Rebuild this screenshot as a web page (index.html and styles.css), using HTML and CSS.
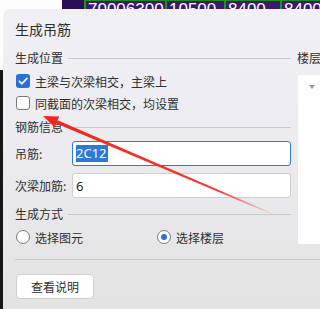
FILE: index.html
```html
<!DOCTYPE html>
<html>
<head>
<meta charset="utf-8">
<link rel="stylesheet" href="styles.css">
</head>
<body>
<div class="strip">
  <div class="strip-blank"></div>
  <div class="strip-grid">
    <div class="cell cell-dark"></div>
    <div class="cell c1">70006300</div>
    <div class="cell c2">10500</div>
    <div class="cell c3">8400</div>
    <div class="cell c4">8400</div>
  </div>
</div>
<div class="dialog">
  <div class="title">生成吊筋</div>
  <div class="main">
    <div class="left">
      <div class="sec-head">生成位置</div>
      <label class="check first"><span class="box checked"><svg viewBox="0 0 14 14" width="14" height="14"><path d="M3.2 7.2 L5.9 9.8 L10.9 4.4" fill="none" stroke="#fff" stroke-width="1.6" stroke-linecap="round" stroke-linejoin="round"/></svg></span>主梁与次梁相交，主梁上</label>
      <label class="check"><span class="box"></span>同截面的次梁相交，均设置</label>
      <div class="sec-head sec2">钢筋信息</div>
      <div class="field f1"><span class="flabel">吊筋:</span><span class="input focus"><span class="sel">2C12</span></span></div>
      <div class="field f2"><span class="flabel">次梁加筋:</span><span class="input">6</span></div>
      <div class="sec-head sec3">生成方式</div>
      <div class="radios">
        <label class="radio"><span class="dot"></span>选择图元</label>
        <label class="radio"><span class="dot on"></span>选择楼层</label>
      </div>
    </div>
    <div class="right">
      <div class="rhead">楼层</div>
      <div class="panel"><span class="tri"></span></div>
    </div>
  </div>
  <div class="sep"></div>
  <div class="btn">查看说明</div>
</div>
<svg class="arrow" width="320" height="309" viewBox="0 0 320 309">
  <defs>
    <linearGradient id="fade" gradientUnits="userSpaceOnUse" x1="57" y1="122" x2="274" y2="214">
      <stop offset="0" stop-color="#f2261b" stop-opacity="1"/>
      <stop offset="0.75" stop-color="#f2261b" stop-opacity="0.9"/>
      <stop offset="1" stop-color="#f2261b" stop-opacity="0"/>
    </linearGradient>
  </defs>
  <polygon points="57.6,120.3 56.4,123.5 272,214.6 272.6,213.2" fill="url(#fade)"/>
  <polygon points="43,116 59.2,116.6 54.6,127.2" fill="#f2261b"/>
</svg>
</body>
</html>
```
FILE: styles.css
```css
body {
  margin: 0;
  width: 320px;
  height: 309px;
  overflow: hidden;
  position: relative;
  background: linear-gradient(#fdfdfd 0 70px, #161616 70px);
  font-family: "Noto Sans CJK SC", "Noto Sans", sans-serif;
  color: #2f2f2f;
}

.strip {
  height: 9px;
  display: flex;
  overflow: hidden;
}
.strip-blank {
  width: 75px;
  background: #fdfdfd;
}
.strip-grid {
  flex: 1;
  display: flex;
  background: #3b1a6c;
  box-shadow: inset 0 1px 0 #1d8c1d;
}
.cell {
  border-left: 2px solid #169a16;
  color: #fff;
  font: 17px/20px "Liberation Sans", sans-serif;
  padding-left: 2px;
  white-space: nowrap;
  box-sizing: border-box;
}
.cell-dark {
  width: 22px;
  background: #2a0d55;
  border-left: none;
}
.c1 { width: 81px; }
.c2 { width: 59px; }
.c3 { width: 56px; }
.c4 { width: 40px; }

.dialog {
  margin-left: 3px;
  height: 300px;
  border-radius: 7px 0 0 0;
  background: linear-gradient(180deg, #f1f0f4 0%, #ecebef 45%, #e3e3e3 100%);
  padding-left: 12px;
  box-sizing: border-box;
  display: flex;
  flex-direction: column;
}

.title {
  height: 40px;
  line-height: 40px;
  font-size: 14px;
}

.main {
  display: grid;
  grid-template-columns: 276px 1fr;
  column-gap: 6px;
}

.left {
  display: flex;
  flex-direction: column;
}

.sec-head {
  height: 18px;
  display: flex;
  align-items: center;
  gap: 5px;
  font-size: 12px;
  line-height: 18px;
}
.sec-head::after {
  content: "";
  flex: 1;
  height: 1px;
  background: #c9c9cc;
}
.sec2 { margin-top: 4px; }
.sec3 { margin-top: 7px; }

.check {
  height: 22px;
  display: flex;
  align-items: center;
  gap: 5px;
  padding-left: 1px;
  font-size: 12px;
}
.check.first { margin-top: 3px; }

.box {
  width: 14px;
  height: 14px;
  box-sizing: border-box;
  border: 1px solid #7a7a7a;
  border-radius: 3px;
  background: #fff;
  display: flex;
}
.box.checked {
  border: none;
  background: #2a6fd8;
}

.field {
  height: 25px;
  display: flex;
  align-items: center;
  font-size: 12px;
}
.f1 { margin-top: 5px; }
.f2 { margin-top: 7px; }
.flabel {
  width: 57px;
  flex: none;
}
.input {
  flex: 1;
  height: 25px;
  box-sizing: border-box;
  border: 1px solid #cfcfd2;
  border-radius: 3px;
  background: #fff;
  padding-left: 3px;
  display: flex;
  align-items: center;
  font: 13px "Noto Sans", sans-serif;
  color: #222;
}
.input.focus {
  border-color: #2f7bd6;
}
.sel {
  background: #2b79d8;
  color: #fff;
  line-height: 17px;
  padding-right: 1px;
}

.radios {
  margin-top: 4px;
  height: 20px;
  display: grid;
  grid-template-columns: 141px 1fr;
  padding-left: 1px;
}
.radio {
  display: flex;
  align-items: center;
  gap: 5px;
  font-size: 12px;
}
.dot {
  width: 14px;
  height: 14px;
  box-sizing: border-box;
  border: 1px solid #7a7a7a;
  border-radius: 50%;
  background: #fff;
  display: flex;
  align-items: center;
  justify-content: center;
}
.dot.on::after {
  content: "";
  width: 6px;
  height: 6px;
  border-radius: 50%;
  background: #2a73d9;
}

.right {
  display: flex;
  flex-direction: column;
}
.rhead {
  height: 18px;
  line-height: 18px;
  font-size: 12px;
  white-space: nowrap;
}
.panel {
  margin-top: 8px;
  margin-left: 1px;
  height: 169px;
  background: #fff;
  padding: 10px 0 0 11px;
  box-sizing: border-box;
}
.tri {
  display: block;
  width: 0;
  height: 0;
  border-left: 3px solid transparent;
  border-right: 3px solid transparent;
  border-top: 4px solid #9a9a9a;
}

.sep {
  margin-top: 12px;
  height: 1px;
  background: #c6c6c6;
}

.btn {
  margin-top: 14px;
  margin-left: 1px;
  width: 78px;
  height: 25px;
  box-sizing: border-box;
  border: 1px solid #d0d0d0;
  border-radius: 4px;
  background: #fff;
  font-size: 12px;
  display: flex;
  align-items: center;
  justify-content: center;
}

.arrow {
  position: absolute;
  left: 0;
  top: 0;
  pointer-events: none;
}
```
